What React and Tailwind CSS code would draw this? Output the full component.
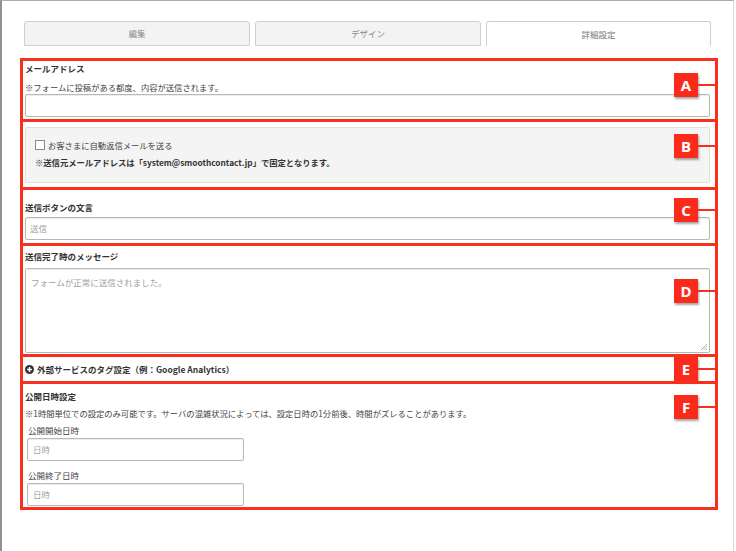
import React from "react";

const RED = "border-[#f72f1f]";

function Badge({ letter, top }) {
  return (
    <div className={`absolute right-0 flex items-center ${top}`}>
      <div className="w-[24px] h-[24px] bg-[#fb2a1b] text-white flex items-center justify-center text-[15px] font-bold leading-none shadow-[1px_2px_2px_rgba(0,0,0,0.35)]" style={{ fontFamily: "'Open Sans', 'Liberation Sans', sans-serif" }}>
        {letter}
      </div>
      <div className="w-[17px] h-[2px] bg-[#f72f1f]" />
    </div>
  );
}

function Input({ placeholder, className = "" }) {
  return (
    <div className={`h-[23px] bg-white border border-[#b8b8b8] rounded-[2px] shadow-[inset_0_1px_1px_rgba(0,0,0,0.08)] flex items-center px-[4px] text-[8.5px] text-[#a0a0a0] ${className}`}>
      {placeholder}
    </div>
  );
}

export default function App() {
  return (
    <div
      className="w-[736px] h-[551px] bg-white overflow-hidden"
      style={{ fontFamily: "'Noto Sans CJK JP', 'Noto Sans', sans-serif" }}
    >
      <div className="w-[734px] h-[551px] border-l-2 border-l-[#8e9299] border-t border-t-[#a9adb3] border-r border-r-[#d9d9d9] pt-[20px]">
        {/* Tabs */}
        <div className="ml-[22px] flex gap-[5px] h-[25px]">
          <div className="w-[226px] h-[25px] bg-[#f3f3f3] border border-[#cfcfcf] rounded-t-[3px] flex items-center justify-center text-[8.5px] text-[#8a8a8a]">
            編集
          </div>
          <div className="w-[226px] h-[25px] bg-[#f3f3f3] border border-[#cfcfcf] rounded-t-[3px] flex items-center justify-center text-[8.5px] text-[#8a8a8a]">
            デザイン
          </div>
          <div className="w-[225px] h-[25px] bg-white border border-b-0 border-[#cfcfcf] rounded-t-[3px] flex items-center justify-center text-[8.5px] text-[#777]">
            詳細設定
          </div>
        </div>

        {/* Sections */}
        <div className="ml-[18px] w-[698px] mt-[12px] flex flex-col">
          {/* A */}
          <div className={`relative border-[3px] ${RED} pl-[2px] pr-[5px] pb-[2px]`}>
            <div className="text-[8.5px] font-bold leading-[14px] text-[#333]">メールアドレス</div>
            <div className="mt-[5px] text-[8.3px] leading-[14px] text-[#444]">※フォームに投稿がある都度、内容が送信されます。</div>
            <Input placeholder="" />
            <Badge letter="A" top="top-[12px]" />
          </div>

          {/* B */}
          <div className={`relative -mt-[3px] border-[3px] ${RED} pl-[2px] pr-[5px] pt-[5px] pb-[4px]`}>
            <div className="h-[56px] bg-[#f4f4f4] border border-[#e0e0e0] rounded-[2px] pl-[9px] pt-[10px]">
              <div className="flex items-center leading-[14px] text-[8.3px] text-[#444]">
                <span className="w-[10px] h-[10px] bg-white border border-[#8a8a8a] mr-[3px] inline-block" />
                お客さまに自動返信メールを送る
              </div>
              <div className="mt-[3px] leading-[14px] text-[8.3px] font-bold text-[#333]">
                ※送信元メールアドレスは「system@smoothcontact.jp」で固定となります。
              </div>
            </div>
            <Badge letter="B" top="top-[12px]" />
          </div>

          {/* C */}
          <div className={`relative -mt-[3px] border-[3px] ${RED} pl-[2px] pr-[5px] pt-[10px] pb-[3px]`}>
            <div className="text-[8.5px] font-bold leading-[14px] text-[#333]">送信ボタンの文言</div>
            <Input placeholder="送信" className="mt-[3px]" />
            <Badge letter="C" top="top-[8px]" />
          </div>

          {/* D */}
          <div className={`relative -mt-[3px] border-[3px] ${RED} pl-[2px] pr-[5px] pt-[3px] pb-[1px]`}>
            <div className="text-[8.5px] font-bold leading-[14px] text-[#333]">送信完了時のメッセージ</div>
            <div className="relative mt-[5px] h-[85px] bg-white border border-[#b8b8b8] rounded-[2px] shadow-[inset_0_1px_1px_rgba(0,0,0,0.08)] px-[5px] pt-[6px] text-[8.5px] leading-[14px] text-[#a0a0a0]">
              フォームが正常に送信されました。
              <svg className="absolute right-[1px] bottom-[1px]" width="9" height="9" viewBox="0 0 9 9">
                <path d="M8 2 L2 8 M8 4.5 L4.5 8 M8 7 L7 8" stroke="#999" strokeWidth="0.8" />
              </svg>
            </div>
            <Badge letter="D" top="top-[33px]" />
          </div>

          {/* E */}
          <div className={`relative -mt-[3px] border-[3px] ${RED} pl-[2px] pr-[5px] py-[5px]`}>
            <div className="flex items-center gap-[3px] text-[8.5px] font-bold leading-[14px] text-[#333]">
              <svg width="9" height="9" viewBox="0 0 10 10">
                <circle cx="5" cy="5" r="5" fill="#333" />
                <path d="M5 2.3 V7.7 M2.3 5 H7.7" stroke="#fff" strokeWidth="1.6" />
              </svg>
              外部サービスのタグ設定（例：Google Analytics）
            </div>
            <Badge letter="E" top="top-[0px]" />
          </div>

          {/* F */}
          <div className={`relative -mt-[3px] border-[3px] ${RED} pl-[2px] pr-[5px] pt-[5px] pb-[1px]`}>
            <div className="text-[8.5px] font-bold leading-[14px] text-[#333]">公開日時設定</div>
            <div className="mt-[3px] text-[8.3px] leading-[14px] text-[#444]">
              ※1時間単位での設定のみ可能です。サーバの混雑状況によっては、設定日時の1分前後、時間がズレることがあります。
            </div>
            <div className="mt-[3px] ml-[3px] text-[8.5px] leading-[14px] text-[#444]">公開開始日時</div>
            <Input placeholder="日時" className="mt-[1px] ml-[2px] w-[217px] px-[5px]" />
            <div className="mt-[7px] ml-[3px] text-[8.5px] leading-[14px] text-[#444]">公開終了日時</div>
            <Input placeholder="日時" className="mt-[1px] ml-[2px] w-[217px] px-[5px]" />
            <Badge letter="F" top="top-[11px]" />
          </div>
        </div>
      </div>
    </div>
  );
}
